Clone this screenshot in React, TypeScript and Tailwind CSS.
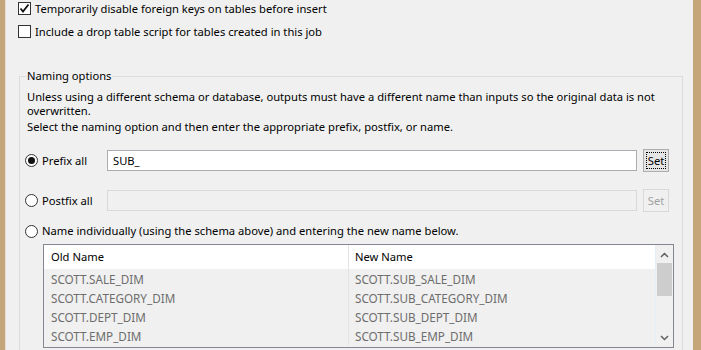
import React from "react";

function Checkbox({ checked }: { checked?: boolean }) {
  return (
    <div className="w-[13px] h-[13px] border border-[#333333] bg-white shrink-0 flex items-center justify-center">
      {checked && (
        <svg width="11" height="11" viewBox="0 0 11 11">
          <path d="M1.5 5.5 L4 8.5 L9.5 1.5" fill="none" stroke="#111" strokeWidth="1.8" />
        </svg>
      )}
    </div>
  );
}

function Radio({ checked }: { checked?: boolean }) {
  return (
    <div className="w-[13px] h-[13px] rounded-full border border-[#333333] bg-white shrink-0 flex items-center justify-center">
      {checked && <div className="w-[7px] h-[7px] rounded-full bg-[#111]" />}
    </div>
  );
}

const rows = [
  ["SCOTT.SALE_DIM", "SCOTT.SUB_SALE_DIM"],
  ["SCOTT.CATEGORY_DIM", "SCOTT.SUB_CATEGORY_DIM"],
  ["SCOTT.DEPT_DIM", "SCOTT.SUB_DEPT_DIM"],
  ["SCOTT.EMP_DIM", "SCOTT.SUB_EMP_DIM"],
];

export default function App() {
  return (
    <div className="w-[701px] h-[350px] overflow-hidden bg-[#f0f0f0] flex font-['Noto_Sans',sans-serif] text-[11.2px] leading-[16px] text-black">
      <div className="w-[5px] bg-[#c5a67b] shrink-0" />
      <div className="w-[1px] bg-[#e6ddd0] shrink-0" />
      <div className="w-[687px] shrink-0 flex flex-col pl-[12px]">
        <div className="mt-[2px] h-[13px] flex items-center gap-[4px] whitespace-nowrap">
          <Checkbox checked />
          <span>Temporarily disable foreign keys on tables before insert</span>
        </div>
        <div className="mt-[10px] h-[13px] flex items-center gap-[4px] whitespace-nowrap">
          <Checkbox />
          <span>Include a drop table script for tables created in this job</span>
        </div>
        <fieldset className="mt-[30px] ml-[1px] w-[664px] min-w-0 h-[320px] border border-[#dcdcdc] px-[7px] shrink-0">
          <legend className="px-[1px] -ml-[1px] leading-[16px]">Naming options</legend>
          <p className="mt-[6px] leading-[14px] whitespace-nowrap">
            Unless using a different schema or database, outputs must have a different name than inputs so the original data is not
            <br />
            overwritten.
          </p>
          <p className="mt-[2px] leading-[14px] whitespace-nowrap">
            Select the naming option and then enter the appropriate prefix, postfix, or name.
          </p>
          <div className="mt-[15px] h-[23px] flex items-center -ml-[2px]">
            <Radio checked />
            <span className="ml-[4px] w-[65px]">Prefix all</span>
            <div className="w-[530px] h-[21px] bg-white border border-[#abadb3] flex items-center pl-[5px]">SUB_</div>
            <div className="ml-[6px] w-[26px] h-[23px] border border-[#adadad] bg-[#e5e5e5] p-[2px]">
              <div className="w-full h-full border border-dotted border-black flex items-center justify-center">Set</div>
            </div>
          </div>
          <div className="mt-[17px] h-[23px] flex items-center -ml-[2px]">
            <Radio />
            <span className="ml-[4px] w-[65px]">Postfix all</span>
            <div className="w-[530px] h-[21px] bg-[#f0f0f0] border border-[#d9d9d9]" />
            <div className="ml-[6px] w-[26px] h-[23px] border border-[#d9d9d9] bg-[#f0f0f0] flex items-center justify-center text-[#a0a0a0]">Set</div>
          </div>
          <div className="mt-[11px] h-[16px] flex items-center -ml-[2px] whitespace-nowrap">
            <Radio />
            <span className="ml-[4px]">Name individually (using the schema above) and entering the new name below.</span>
          </div>
          <div className="mt-[5px] ml-[16px] w-[631px] h-[104px] border border-[#828790] flex overflow-hidden">
            <div className="flex-1 flex flex-col">
              <div className="h-[24px] bg-white flex shrink-0">
                <div className="w-[305px] pl-[7px] border-r border-[#e5e5e5] flex items-center">Old Name</div>
                <div className="flex-1 pl-[6px] flex items-center">New Name</div>
              </div>
              {rows.map(([a, b]) => (
                <div key={a} className="h-[19px] flex shrink-0 text-[#6d6d6d] text-[11.7px]">
                  <div className="w-[305px] pl-[7px] border-r border-[#e3e3e3] flex items-center">{a}</div>
                  <div className="flex-1 pl-[6px] flex items-center">{b}</div>
                </div>
              ))}
            </div>
            <div className="w-[18px] border-l border-[#e8eef6] flex flex-col items-center shrink-0">
              <div className="h-[17px] mt-[1px] flex items-center justify-center">
                <svg width="9" height="6" viewBox="0 0 9 6">
                  <path d="M1 5 L4.5 1.5 L8 5" fill="none" stroke="#606060" strokeWidth="1.5" />
                </svg>
              </div>
              <div className="w-[15px] h-[33px] bg-[#cdcdcd]" />
              <div className="flex-1" />
              <div className="h-[17px] mb-[1px] flex items-center justify-center">
                <svg width="9" height="6" viewBox="0 0 9 6">
                  <path d="M1 1 L4.5 4.5 L8 1" fill="none" stroke="#606060" strokeWidth="1.5" />
                </svg>
              </div>
            </div>
          </div>
        </fieldset>
      </div>
      <div className="w-[8px] bg-[#c5a67b] shrink-0" />
    </div>
  );
}
